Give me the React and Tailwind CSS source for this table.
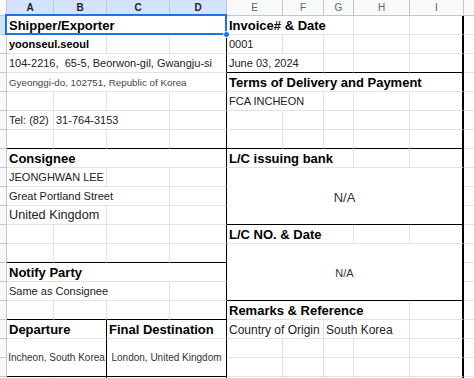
const FONT = "font-['Liberation_Sans',Arial,sans-serif]";

// each row: [span, text, kind, rowSpan]; a negative span just skips columns
const ROWS = {
  1: [[4, "Shipper/Exporter", "h"], [3, "Invoice# & Date", "h"], [1], [1]],
  2: [[2, "yoonseul.seoul", "b"], [1], [1], [1, "0001", "n"], [1], [1], [1], [1]],
  3: [[4, "104-2216,  65-5, Beorwon-gil, Gwangju-si", "n"], [2, "June 03, 2024", "n"], [1], [1], [1]],
  4: [[4, "Gyeonggi-do, 102751, Republic of Korea", "g"], [5, "Terms of Delivery and Payment", "h"]],
  5: [[1], [1], [1], [1], [2, "FCA INCHEON", "n"], [1], [1], [1]],
  6: [[1, "Tel: (82)", "n"], [2, "31-764-3153", "n"], [1], [1], [1], [1], [1], [1]],
  7: [[1], [1], [1], [1], [1], [1], [1], [1], [1]],
  8: [[4, "Consignee", "h"], [3, "L/C issuing bank", "h"], [1], [1]],
  9: [[2, "JEONGHWAN LEE", "n"], [1], [1], [5, "N/A", "na", 3]],
  10: [[3, "Great Portland Street", "n"], [1]],
  11: [[2, "United Kingdom", "l"], [1], [1]],
  12: [[1], [1], [1], [1], [3, "L/C NO. & Date", "h"], [1], [1]],
  13: [[1], [1], [1], [1], [5, "N/A", "nb", 3]],
  14: [[4, "Notify Party", "h"]],
  15: [[3, "Same as Consignee", "n"], [1]],
  16: [[1], [1], [1], [1], [4, "Remarks & Reference", "h"], [1]],
  17: [[2, "Departure", "h"], [2, "Final Destination", "h"], [2, "Country of Origin", "m"], [2, "South Korea", "m"], [1]],
  18: [[2, "Incheon, South Korea", "c", 2], [2, "London, United Kingdom", "c", 2], [1], [1], [1], [1], [1]],
  19: [[-4], [1], [1], [1], [1], [1]],
  20: [[1], [1], [1], [1], [1], [1], [1], [1], [1]],
};

const KIND = {
  h: "items-end pl-[2px] pb-[2px] text-[13px] font-bold text-black",
  b: "items-end pl-[2px] pb-[3px] text-[11px] font-bold text-black",
  n: "items-end pl-[2px] pb-[3px] text-[11px] text-[#222222]",
  g: "items-end pl-[2px] pb-[3px] text-[9.8px] text-[#444444]",
  l: "items-end pl-[2px] pb-[2px] text-[12.7px] text-[#222222]",
  m: "items-end pl-[2px] pb-[2px] text-[12px] text-[#222222]",
  na: "items-center justify-center pt-[2px] text-[13px] text-[#333333]",
  nb: "items-center justify-center pt-[3px] text-[11px] text-[#333333]",
  c: "items-center justify-center pt-[1px] text-[10px] text-[#333333]",
};

const LEFT_BLACK = [7, 13, 16, 19];
const RIGHT_BLACK = [3, 7, 11, 15];

const bottomClass = (lastRow, col) => {
  const list = col <= 4 ? LEFT_BLACK : RIGHT_BLACK;
  return list.includes(lastRow) ? "border-b border-b-black" : "border-b border-b-[#e2e2e2]";
};

const rightClass = (row, endCol) => {
  if (endCol === 4) return "border-r border-r-black";
  if (endCol === 9) return "border-r-2 border-r-black";
  if (endCol === 2 && row >= 17) return "border-r border-r-black";
  return "border-r border-r-[#e2e2e2]";
};

const LETTERS = ["A", "B", "C", "D", "E", "F", "G", "H", "I", ""];

const App = () => {
  const cells = [];

  Object.entries(ROWS).forEach(([key, segs]) => {
    const row = Number(key);
    let col = 1;
    segs.forEach(([span, text, kind, rowSpan = 1]) => {
      if (span < 0) {
        col += -span;
        return;
      }
      const endCol = col + span - 1;
      cells.push(
        <div
          key={`${row}-${col}`}
          style={{ gridColumn: `${col + 1} / span ${span}`, gridRow: `${row + 1} / span ${rowSpan}` }}
          className={`flex bg-white leading-none whitespace-pre overflow-hidden ${bottomClass(row + rowSpan - 1, col)} ${rightClass(row, endCol)} ${kind ? KIND[kind] : ""}`}
        >
          {text}
        </div>
      );
      col += span;
    });

    // column J
    cells.push(
      <div
        key={`${row}-j`}
        style={{ gridColumn: "11 / span 1", gridRow: `${row + 1} / span 1` }}
        className="bg-white border-b border-b-[#e2e2e2]"
      />
    );

    // row header gutter
    cells.push(
      <div
        key={`${row}-g`}
        style={{ gridColumn: "1 / span 1", gridRow: `${row + 1} / span 1` }}
        className={`border-r border-b border-[#c4c7c5] ${row === 1 ? "bg-[#d3e3fd]" : "bg-[#f8f9fa]"}`}
      />
    );
  });

  return (
    <div className={`relative w-[474px] h-[378px] overflow-hidden bg-white ${FONT}`}>
      <div className="grid grid-cols-[7px_47px_53px_63px_57px_56px_41px_30px_56px_54px_1fr] grid-rows-[16px_repeat(20,19px)]">
        {/* column headers */}
        <div className="bg-[#f8f9fa] border-r border-b border-[#c4c7c5]" />
        {LETTERS.map((l, i) => (
          <div
            key={i}
            className={`flex items-center justify-center text-[10px] leading-none border-b border-[#c4c7c5] ${
              i < 9 ? "border-r" : ""
            } ${i < 4 ? "bg-[#d3e3fd] text-[#1f1f1f] font-bold" : "bg-[#f8f9fa] text-[#5f6368]"}`}
          >
            {l}
          </div>
        ))}
        {cells}
      </div>

      {/* selection box around A1:D1 */}
      <div className="absolute left-[5px] top-[14px] w-[222px] h-[21px] border-2 border-[#1a73e8] pointer-events-none" />
      <div className="absolute left-[223px] top-[31px] w-[7px] h-[7px] rounded-full bg-[#1a73e8] border border-white pointer-events-none" />
    </div>
  );
};

export default App;
